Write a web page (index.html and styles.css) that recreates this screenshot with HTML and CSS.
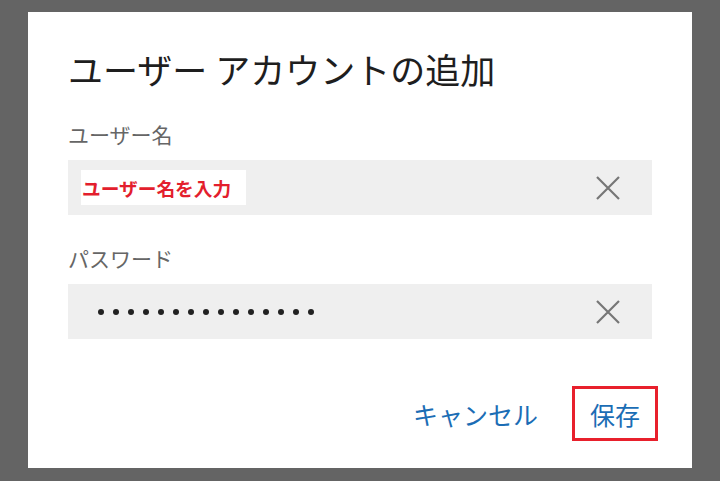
FILE: index.html
```html
<!DOCTYPE html>
<html lang="ja">
<head>
<meta charset="utf-8">
<link rel="stylesheet" href="styles.css">
</head>
<body>
<div class="dialog">
  <h1 class="title">ユーザー アカウントの追加</h1>
  <div class="field">
    <div class="label">ユーザー名</div>
    <div class="input">
      <span class="placeholder">ユーザー名を入力</span>
      <svg class="clear" width="24" height="24" viewBox="0 0 24 24"><path d="M1 1 L23 23 M23 1 L1 23" stroke="#767676" stroke-width="2.2" fill="none"/></svg>
    </div>
  </div>
  <div class="field">
    <div class="label">パスワード</div>
    <div class="input">
      <span class="dots"><i></i><i></i><i></i><i></i><i></i><i></i><i></i><i></i><i></i><i></i><i></i><i></i><i></i><i></i><i></i></span>
      <svg class="clear" width="24" height="24" viewBox="0 0 24 24"><path d="M1 1 L23 23 M23 1 L1 23" stroke="#767676" stroke-width="2.2" fill="none"/></svg>
    </div>
  </div>
  <div class="actions">
    <button class="btn">キャンセル</button>
    <button class="btn save">保存</button>
  </div>
</div>
</body>
</html>
```
FILE: styles.css
```css
html, body {
  margin: 0;
  padding: 0;
  background: #646464;
  font-family: "Noto Sans CJK JP", "Noto Sans", sans-serif;
}
.dialog {
  box-sizing: border-box;
  margin: 12px 28px 0 28px;
  width: 664px;
  height: 456px;
  background: #fff;
  padding: 36px 40px 0 40px;
  display: flex;
  flex-direction: column;
}
.title {
  margin: 0;
  font-size: 35px;
  font-weight: 400;
  line-height: 42px;
  color: #1e1e1e;
}
.field {
  display: flex;
  flex-direction: column;
}
.field:first-of-type { margin-top: 31px; }
.label {
  font-size: 21px;
  line-height: 27px;
  color: #666;
  margin-bottom: 12px;
}
.field + .field { margin-top: 30px; }
.input {
  height: 55px;
  background: #efefef;
  display: flex;
  align-items: center;
  justify-content: space-between;
  padding: 0 32px 0 13px;
}
.placeholder {
  background: #fff;
  color: #e31e2d;
  font-weight: 700;
  font-size: 18.7px;
  line-height: 35px;
  height: 35px;
  width: 165px;
  box-sizing: border-box;
  padding-left: 1px;
}
.dots {
  display: flex;
  gap: 9px;
  padding-left: 17px;
}
.dots i {
  display: block;
  width: 6px;
  height: 6px;
  border-radius: 50%;
  background: #222;
}
.actions {
  display: flex;
  justify-content: flex-end;
  align-items: center;
  margin-top: 47px;
  margin-right: -6px;
  gap: 22px;
}
.btn {
  font-family: inherit;
  background: none;
  border: none;
  font-size: 25px;
  color: #1b6db5;
  padding: 0 12px;
  height: 55px;
}
.save {
  border: 3px solid #e8202c;
  width: 86px;
  padding: 0;
}
```
